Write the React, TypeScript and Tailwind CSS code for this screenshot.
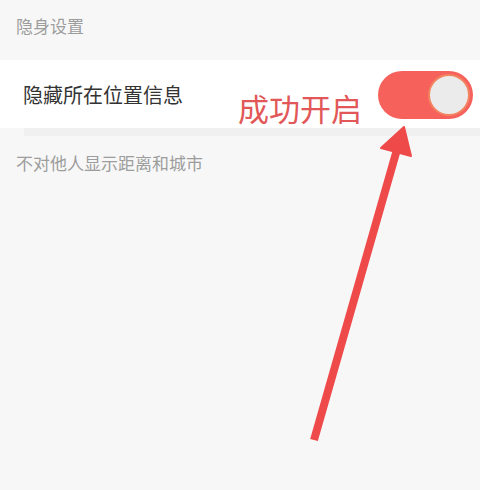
export default function App() {
  return (
    <div
      className="relative w-[480px] h-[490px] overflow-hidden bg-[#f7f7f7]"
      style={{ fontFamily: '"Noto Sans CJK SC", "Noto Sans", sans-serif' }}
    >
      <div className="h-[60px] pl-4 pt-[13px] text-[17px] leading-[26px] text-[#9d9d9d]">
        隐身设置
      </div>

      <div className="h-[68px] bg-white flex items-center pl-[23px] pr-[7px]">
        <span className="text-[20px] text-[#333] mt-[2px]">隐藏所在位置信息</span>
        <span className="ml-auto mr-[16px] mt-[26px] text-[31px] leading-none text-[#e25757]">
          成功开启
        </span>
        <div className="w-[95px] h-[48px] rounded-full bg-[#f6615c] flex items-center justify-end pr-[3px] mt-[1px]">
          <div className="w-[42px] h-[42px] rounded-full bg-[#ebebeb] border-2 border-[#f28460]" />
        </div>
      </div>
      <div className="h-[8px] ml-[24px] bg-[#f0f0f0]" />

      <div className="pl-4 pt-[14px] text-[17px] leading-[26px] text-[#9d9d9d]">
        不对他人显示距离和城市
      </div>

      {/* annotation arrow */}
      <svg className="absolute left-0 top-0" width="480" height="490" viewBox="0 0 480 490">
        <line x1="314" y1="440" x2="398" y2="146" stroke="#ef4a4a" strokeWidth="8" />
        <polygon points="404,127 381,148 411,156" fill="#ef4a4a" stroke="#ef4a4a" strokeWidth="2" strokeLinejoin="round" />
      </svg>
    </div>
  );
}
